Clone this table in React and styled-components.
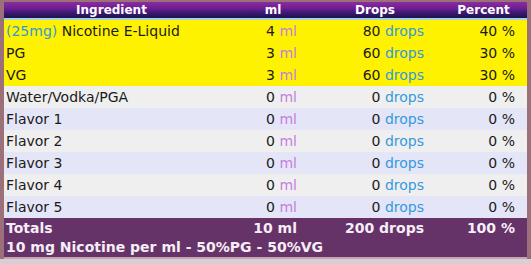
import React from "react";
import styled, { createGlobalStyle } from "styled-components";

const Global = createGlobalStyle`
  html, body { margin: 0; padding: 0; background: #d8ced6; }
  body { font-family: "DejaVu Sans", Verdana, sans-serif; }
`;

const Frame = styled.div`
  width: 531px;
  box-sizing: border-box;
  background: #9c7078;
  padding: 2px 4px 0 4px;
`;

const Table = styled.div`
  width: 523px;
  display: flex;
  flex-direction: column;
  border-bottom: 2px solid #c9a3ad;
`;

const COLS = "215px 90px 127px 91px";

const Head = styled.div`
  display: grid;
  grid-template-columns: ${COLS};
  height: 16px;
  background: linear-gradient(#8c2c9e 0%, #6b1f92 40%, #3a1870 70%, #1b1548 100%);
  border-bottom: 2px solid #a9d2ea;
  color: #ffffff;
  font-weight: bold;
  font-size: 12px;
  line-height: 17px;
`;

const HeadCell = styled.div`
  text-align: center;
  padding-left: ${(p) => p.$shift || 0}px;
  white-space: nowrap;
`;

const Row = styled.div`
  display: grid;
  grid-template-columns: ${COLS};
  height: 22px;
  line-height: 22px;
  font-size: 14px;
  color: #1a1a1a;
  background: ${(p) => p.$bg};
`;

const NameCell = styled.div`
  padding-left: 2px;
  white-space: nowrap;
`;

const NumCell = styled.div`
  text-align: right;
  padding-right: 12px;
  white-space: nowrap;
`;

const Tag = styled.span`
  color: #3399d6;
`;

const MlUnit = styled.span`
  color: #c57ede;
`;

const DropUnit = styled.span`
  color: #3399dd;
`;

const Totals = styled.div`
  background: #663369;
  color: #f6eef6;
  font-weight: bold;
  font-size: 14px;
  padding-top: 1px;
`;

const TotalsRow = styled.div`
  display: grid;
  grid-template-columns: ${COLS};
  line-height: 18px;
`;

const Summary = styled.div`
  padding-left: 2px;
  line-height: 20px;
  white-space: nowrap;
`;

const YELLOW = "#fff200";
const GRAY = "#f0eff0";
const LAV = "#e5e5f8";

const rows = [
  { tag: "(25mg)", name: " Nicotine E-Liquid", ml: 4, drops: 80, pct: 40, bg: YELLOW },
  { name: "PG", ml: 3, drops: 60, pct: 30, bg: YELLOW },
  { name: "VG", ml: 3, drops: 60, pct: 30, bg: YELLOW },
  { name: "Water/Vodka/PGA", ml: 0, drops: 0, pct: 0, bg: GRAY },
  { name: "Flavor 1", ml: 0, drops: 0, pct: 0, bg: LAV },
  { name: "Flavor 2", ml: 0, drops: 0, pct: 0, bg: GRAY },
  { name: "Flavor 3", ml: 0, drops: 0, pct: 0, bg: LAV },
  { name: "Flavor 4", ml: 0, drops: 0, pct: 0, bg: GRAY },
  { name: "Flavor 5", ml: 0, drops: 0, pct: 0, bg: LAV },
];

export default function App() {
  return (
    <>
      <Global />
      <Frame>
        <Table>
          <Head>
            <HeadCell>Ingredient</HeadCell>
            <HeadCell $shift={18}>ml</HeadCell>
            <HeadCell $shift={5}>Drops</HeadCell>
            <HeadCell $shift={4}>Percent</HeadCell>
          </Head>
          {rows.map((r, i) => (
            <Row key={i} $bg={r.bg}>
              <NameCell>
                {r.tag && <Tag>{r.tag}</Tag>}
                {r.name}
              </NameCell>
              <NumCell>
                {r.ml} <MlUnit>ml</MlUnit>
              </NumCell>
              <NumCell>
                {r.drops} <DropUnit>drops</DropUnit>
              </NumCell>
              <NumCell>{r.pct} %</NumCell>
            </Row>
          ))}
          <Totals>
            <TotalsRow>
              <NameCell>Totals</NameCell>
              <NumCell>10 ml</NumCell>
              <NumCell>200 drops</NumCell>
              <NumCell>100 %</NumCell>
            </TotalsRow>
            <Summary>10 mg Nicotine per ml - 50%PG - 50%VG</Summary>
          </Totals>
        </Table>
      </Frame>
    </>
  );
}
